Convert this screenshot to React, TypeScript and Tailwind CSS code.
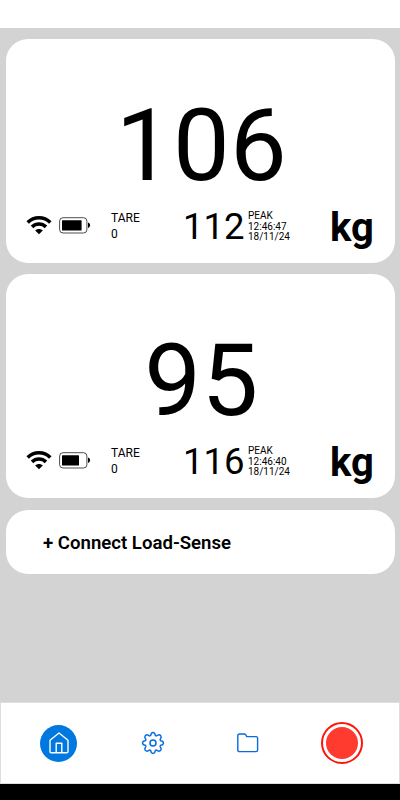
type Reading = {
  id: number;
  value: string;
  tare: string;
  peak: string;
  time: string;
  date: string;
  battery: number;
};

const readings: Reading[] = [
  { id: 1, value: '106', tare: '0', peak: '112', time: '12:46:47', date: '18/11/24', battery: 19.6 },
  { id: 2, value: '95', tare: '0', peak: '116', time: '12:46:40', date: '18/11/24', battery: 17 },
];

const WifiIcon = () => (
  <svg width="26" height="20" viewBox="0 0 26 20" fill="none" stroke="#000" strokeWidth="3.6">
    <path d="M1.7 7.4 C8 1.1 18 1.1 24.3 7.4" />
    <path d="M6 11.9 C10 8.1 16 8.1 20 11.9" />
    <path d="M9.2 15.4 C11.3 13.4 14.7 13.4 16.8 15.4 L13 19.2 Z" fill="#000" stroke="none" />
  </svg>
);

const BatteryIcon = ({ level }: { level: number }) => (
  <svg width="32" height="17" viewBox="0 0 32 17">
    <rect x="0.6" y="0.7" width="27.3" height="15.3" rx="3.4" fill="none" stroke="#000" strokeWidth="0.7" />
    <rect x="3" y="3.2" width={level} height="10.4" rx="0.6" />
    <path d="M29 5.6 C31.8 6.4 31.8 10.2 29 11 Z" />
  </svg>
);

const HomeIcon = () => (
  <svg width="20" height="22" viewBox="0 0 20 22" fill="none" stroke="#fff" strokeWidth="1.4" strokeLinejoin="round">
    <path d="M1 8.2 L10 1 L19 8.2 V19.6 A1.2 1.2 0 0 1 17.8 20.8 H2.2 A1.2 1.2 0 0 1 1 19.6 Z" />
    <path d="M7.2 20.8 V11.3 H12.8 V20.8" />
  </svg>
);

const GearIcon = () => (
  <svg
    width="24"
    height="24"
    viewBox="0 0 24 24"
    fill="none"
    stroke="#066bdc"
    strokeWidth="1.5"
    strokeLinejoin="round"
  >
    <circle cx="12" cy="12" r="3" />
    <path d="M10.2 2.6 Q12 0.4 13.8 2.6 L14.2 4.2 Q14.8 5.3 16 4.7 L17.4 3.9 Q20.4 3.6 20.1 6.6 L19.3 8 Q18.7 9.2 19.8 9.8 L21.4 10.2 Q23.6 12 21.4 13.8 L19.8 14.2 Q18.7 14.8 19.3 16 L20.1 17.4 Q20.4 20.4 17.4 20.1 L16 19.3 Q14.8 18.7 14.2 19.8 L13.8 21.4 Q12 23.6 10.2 21.4 L9.8 19.8 Q9.2 18.7 8 19.3 L6.6 20.1 Q3.6 20.4 3.9 17.4 L4.7 16 Q5.3 14.8 4.2 14.2 L2.6 13.8 Q0.4 12 2.6 10.2 L4.2 9.8 Q5.3 9.2 4.7 8 L3.9 6.6 Q3.6 3.6 6.6 3.9 L8 4.7 Q9.2 5.3 9.8 4.2 Z" />
  </svg>
);

const FolderIcon = () => (
  <svg width="22" height="20" viewBox="0 0 22 20" fill="none" stroke="#066bdc" strokeWidth="1.4" strokeLinejoin="round">
    <path d="M2.4 1 H7.2 Q8.2 1 8.8 1.9 L9.8 3.6 H19 Q20.6 3.6 20.6 5.2 V17 Q20.6 18.6 19 18.6 H2.4 Q0.8 18.6 0.8 17 V2.6 Q0.8 1 2.4 1 Z" />
  </svg>
);

const ReadingCard = ({ reading }: { reading: Reading }) => (
  <section className="flex h-[223.8px] flex-col rounded-[22px] bg-white pt-14">
    <p className="h-[101px] pl-[2px] text-center text-[101px] leading-[102px] tracking-[0.4px]">{reading.value}</p>
    <div className="flex items-start pt-[10px] pl-5">
      <div className="flex w-[85px] shrink-0 items-center gap-[7px] pt-[9px]">
        <WifiIcon />
        <BatteryIcon level={reading.battery} />
      </div>
      <div className="w-[72px] shrink-0 pt-1 text-xs leading-4">
        <p>TARE</p>
        <p>{reading.tare}</p>
      </div>
      <p className="w-[65px] shrink-0 pt-[2px] text-[36.5px] leading-[38px]">{reading.peak}</p>
      <div className="w-[82px] shrink-0 pt-[5px] text-[10px] leading-[10.2px]">
        <p>PEAK</p>
        <p>{reading.time}</p>
        <p>{reading.date}</p>
      </div>
      <p className="text-[40px] leading-[44px] font-bold">kg</p>
    </div>
  </section>
);

const App = () => {
  return (
    <div className="flex h-[800px] w-[400px] flex-col overflow-hidden bg-black font-[Roboto,sans-serif] text-black">
      <div className="h-7 shrink-0 bg-white" />

      <main className="flex flex-1 flex-col gap-[11.4px] bg-[#d3d3d3] pt-[11.3px] pr-[5px] pl-[6px]">
        {readings.map((reading) => (
          <ReadingCard key={reading.id} reading={reading} />
        ))}
        <button type="button" className="h-16 rounded-[22px] bg-white pt-1 pl-[37px] text-left text-[18.6px] font-semibold">
          + Connect Load-Sense
        </button>
      </main>

      <nav className="mb-4 flex h-[82px] shrink-0 items-center border border-[#dedede] bg-white pl-[39px]">
        <button type="button" aria-label="Home" className="mr-[64px] flex size-[37px] items-center justify-center rounded-full bg-[#0078e0]">
          <HomeIcon />
        </button>
        <button type="button" aria-label="Settings" className="mr-[72px]">
          <GearIcon />
        </button>
        <button type="button" aria-label="Files" className="mr-[62px]">
          <FolderIcon />
        </button>
        <button type="button" aria-label="Record" className="flex size-[42px] items-center justify-center rounded-full border-2 border-[#ff1408]">
          <span className="size-8 rounded-full bg-[#ff3b30]" />
        </button>
      </nav>
    </div>
  );
};

export default App;
